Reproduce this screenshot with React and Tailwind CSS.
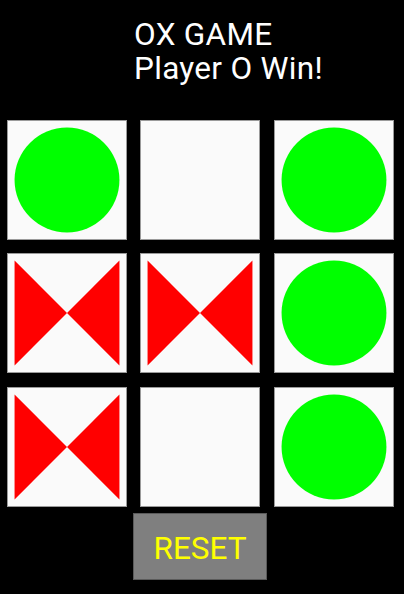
const board = ["O", "", "O", "X", "X", "O", "X", "", "O"];

function Circle() {
  return (
    <svg viewBox="0 0 120 120" className="w-full h-full">
      <circle cx="60" cy="60" r="53.33" fill="#00ff00" />
    </svg>
  );
}

function Bowtie() {
  return (
    <svg viewBox="0 0 120 120" className="w-full h-full">
      <polygon points="6.67,6.67 6.67,113.33 60,60" fill="#ff0000" />
      <polygon points="113.33,6.67 113.33,113.33 60,60" fill="#ff0000" />
    </svg>
  );
}

export default function App() {
  return (
    <div
      className="w-[404px] h-[594px] bg-black overflow-hidden flex flex-col"
      style={{ fontFamily: "Roboto, 'Liberation Sans', sans-serif" }}
    >
      <div className="pt-[18px] pl-[134px] text-white text-[31.5px] leading-[34px] tracking-[0.3px]">
        <div>OX GAME</div>
        <div>Player O Win!</div>
      </div>

      <div className="mt-[34px] ml-[7px] grid grid-cols-[120px_120px_120px] gap-[13.33px]">
        {board.map((v, i) => (
          <div
            key={i}
            className="w-[120px] h-[120px] bg-[#fafafa] border border-[#9a9a9a]"
          >
            {v === "O" && <Circle />}
            {v === "X" && <Bowtie />}
          </div>
        ))}
      </div>

      <div className="flex mt-[6.67px] pl-[133.33px]">
        <button className="w-[133.33px] h-[66.67px] bg-[#7f7f7f] border border-[#5a5a5a] text-[#ffff00] text-[31.5px] leading-none pt-[4px]">
          RESET
        </button>
      </div>
    </div>
  );
}
